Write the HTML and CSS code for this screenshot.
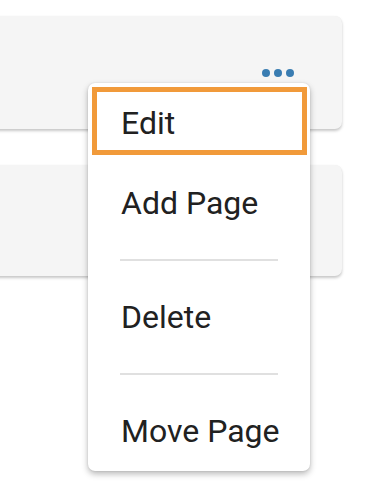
FILE: index.html
```html
<!DOCTYPE html>
<html>
<head>
<meta charset="utf-8">
<link rel="stylesheet" href="styles.css">
</head>
<body>
<div class="page">
  <div class="cards">
    <div class="card card-first">
      <div class="dots"><span class="dot"></span><span class="dot"></span><span class="dot"></span></div>
    </div>
    <div class="card card-second"></div>
  </div>
  <div class="menu">
    <div class="item item-focused">Edit</div>
    <div class="item item-add">Add Page</div>
    <div class="divider"></div>
    <div class="item">Delete</div>
    <div class="divider"></div>
    <div class="item">Move Page</div>
  </div>
</div>
</body>
</html>
```
FILE: styles.css
```css
html, body {
  margin: 0;
  padding: 0;
  background: #ffffff;
  font-family: Roboto, "Noto Sans", Arial, sans-serif;
}
.page {
  position: relative;
  width: 375px;
  height: 492px;
  overflow: hidden;
}
.cards {
  display: flex;
  flex-direction: column;
  gap: 36px;
  padding-top: 16px;
  margin-left: -20px;
  width: 362px;
}
.card {
  background: #f5f5f5;
  border-radius: 7px;
  box-shadow: 0 2px 3px rgba(0, 0, 0, 0.22), 0 0 1px rgba(0, 0, 0, 0.06);
}
.card-first {
  height: 113px;
  box-sizing: border-box;
  padding: 53px 48px 0 0;
}
.card-second {
  height: 111px;
}
.dots {
  display: flex;
  justify-content: flex-end;
  gap: 4px;
}
.dot {
  width: 8px;
  height: 8px;
  border-radius: 50%;
  background: #3a7db2;
}
.menu {
  position: absolute;
  left: 88px;
  top: 83px;
  width: 222px;
  box-sizing: border-box;
  padding: 4px 3px 20px 4px;
  background: #ffffff;
  border-radius: 7px;
  box-shadow: 0 3px 6px rgba(0, 0, 0, 0.28), 0 0 2px rgba(0, 0, 0, 0.12);
}
.item {
  font-size: 32px;
  line-height: 40px;
  color: #212121;
  padding-left: 29px;
}
.item-focused {
  border: 5px solid #f19a3a;
  padding: 11px 24px 7px 24px;
}
.item-add {
  margin-top: 28px;
}
.divider {
  height: 2px;
  background: #e0e0e0;
  margin: 36px 29px 36px 28px;
}
```
